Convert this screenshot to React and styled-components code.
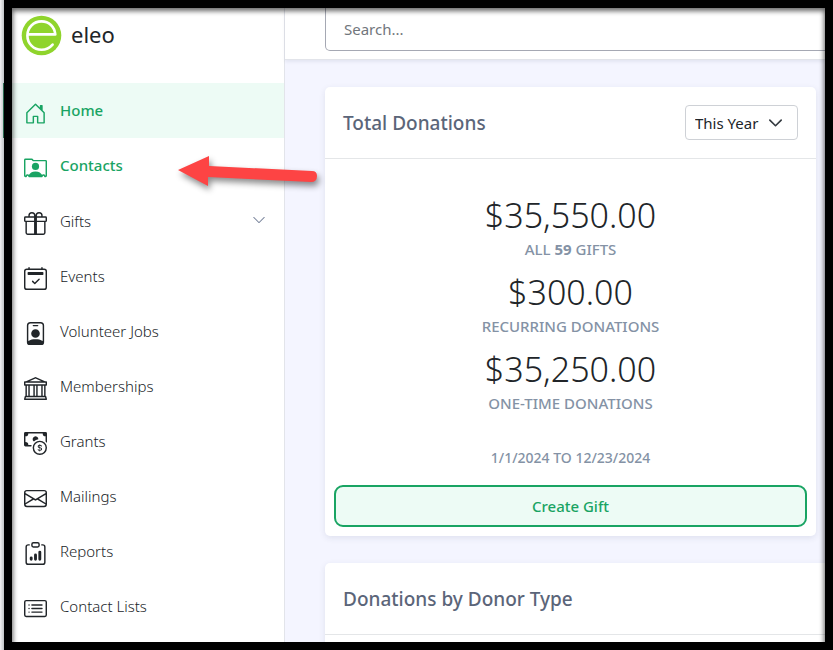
import { useState } from "react";
import styled, { createGlobalStyle } from "styled-components";
import {
  BsBank,
  BsCalendar2Check,
  BsCardList,
  BsCashCoin,
  BsChevronDown,
  BsClipboardData,
  BsEnvelope,
  BsGift,
  BsHouseDoor,
  BsPersonBadge,
  BsPersonRolodex,
} from "react-icons/bs";

const GlobalStyle = createGlobalStyle`
  * {
    box-sizing: border-box;
  }
  body {
    margin: 0;
    color: #212529;
    font-family: "Noto Sans", "Open Sans", sans-serif;
    font-size: 15px;
  }
`;

const Page = styled.div`
  position: relative;
  padding-left: 4px;
  background: linear-gradient(to right, #f2f2f3, #bfc2c5 4px);
`;

// edge of the active item, seen outside the frame
const ActiveEdge = styled.span`
  position: absolute;
  left: 3px;
  top: 83px;
  width: 1px;
  height: 55px;
  background: #2c6b50;
`;

const Frame = styled.div`
  position: relative;
  height: 100vh;
  border: 8px solid #000;
  display: flex;
  overflow: hidden;
  background: #f4f5ff;

  /* soft shadow the frame casts on the page */
  &::after {
    content: "";
    position: absolute;
    inset: 0 0 -12px;
    box-shadow: inset 0 2px 5px 1px rgba(0, 0, 0, 0.6);
    pointer-events: none;
    z-index: 3;
  }
`;

const Sidebar = styled.aside`
  flex: 0 0 273px;
  background: #fff;
  border-right: 1px solid #e2e4ea;
`;

const Brand = styled.a`
  display: flex;
  align-items: center;
  gap: 9px;
  height: 75px;
  padding: 0 9px 20px;
  color: #212529;
  font-size: 22px;
  font-weight: 400;
  line-height: 28px;
  text-decoration: none;
`;

const BrandName = styled.span`
  padding-bottom: 3px;
`;

const NavItem = styled.a`
  display: flex;
  align-items: center;
  gap: 13px;
  height: 55px;
  padding: 0 18px 0 12px;
  background: ${(props) => (props.$active ? "#edfbf5" : "transparent")};
  color: ${(props) => (props.$green ? "#19a463" : "#212529")};
  font-weight: ${(props) => (props.$green ? 500 : 300)};
  text-decoration: none;

  svg {
    flex: none;
  }
  > svg:first-child {
    margin-top: 6px;
  }
  > svg:last-child {
    margin-bottom: 2px;
  }
`;

const NavLabel = styled.span`
  flex: 1;
  padding-bottom: ${(props) => (props.$green ? "2px" : "0")};
`;

const Main = styled.main`
  flex: 1;
  min-width: 0;
`;

const TopBar = styled.header`
  height: 52px;
  padding-left: 40px;
  background: #fff;
  border-bottom: 1px solid #e2e4ea;
  box-shadow: 0 2px 3px rgba(40, 45, 90, 0.08);
`;

const Search = styled.input`
  display: block;
  width: calc(100% + 8px);
  height: 43px;
  padding: 0 18px;
  border: 1px solid #a5a8b3;
  border-top: none;
  border-radius: 0 0 5px 5px;
  background: #fff;
  font: inherit;
  font-weight: 400;

  &::placeholder {
    color: #71767c;
    opacity: 1;
  }
`;

const Cards = styled.div`
  display: flex;
  flex-direction: column;
  gap: 27px;
  padding: 27px 9px 0 40px;
`;

const Card = styled.section`
  margin-right: ${(props) => (props.$wide ? "-20px" : "0")};
  background: #fff;
  border-radius: 5px;
  box-shadow: 0 2px 6px rgba(40, 45, 90, 0.1);
`;

const CardHeader = styled.div`
  display: flex;
  align-items: center;
  justify-content: space-between;
  height: 72px;
  padding: 0 18px;
  border-bottom: 1px solid #e4e6e8;
`;

const CardTitle = styled.h2`
  margin: 0;
  color: #5b6579;
  font-size: 19px;
  font-weight: 500;
`;

const SelectBox = styled.div`
  position: relative;

  svg {
    position: absolute;
    right: 16px;
    top: 11px;
    pointer-events: none;
  }
`;

const Select = styled.select`
  appearance: none;
  width: 113px;
  height: 35px;
  padding: 0 9px;
  border: 1px solid #ced1d6;
  border-radius: 4px;
  background: #fff;
  color: #212529;
  font: inherit;
`;

const CardBody = styled.div`
  padding: 33px 9px 9px;
  text-align: center;
`;

const Stat = styled.div`
  height: 77px;
`;

const Amount = styled.div`
  font-size: 34px;
  font-weight: 300;
  line-height: 46px;
`;

const Caption = styled.div`
  color: #8492a5;
  font-size: 15px;
  font-weight: 500;
  line-height: 22px;
`;

const Period = styled(Caption)`
  margin: 24px 0 16px;
  font-size: 14px;
`;

const CreateButton = styled.button`
  width: 100%;
  height: 42px;
  border: 2px solid #19a463;
  border-radius: 9px;
  background: #edfbf5;
  color: #19a463;
  font: inherit;
  font-weight: 500;
  cursor: pointer;
`;

const Arrow = styled.svg`
  position: absolute;
  left: 162px;
  top: 142px;
  z-index: 2;
  filter: drop-shadow(2px 4px 3px rgba(0, 0, 0, 0.45));
  pointer-events: none;
`;

const navItems = [
  { label: "Home", icon: BsHouseDoor, active: true, green: true },
  { label: "Contacts", icon: BsPersonRolodex, green: true },
  { label: "Gifts", icon: BsGift, more: true },
  { label: "Events", icon: BsCalendar2Check },
  { label: "Volunteer Jobs", icon: BsPersonBadge },
  { label: "Memberships", icon: BsBank },
  { label: "Grants", icon: BsCashCoin },
  { label: "Mailings", icon: BsEnvelope },
  { label: "Reports", icon: BsClipboardData },
  { label: "Contact Lists", icon: BsCardList },
];

function Logo() {
  return (
    <svg width="41" height="41" viewBox="0 0 41 41" aria-hidden="true">
      <circle cx="20.5" cy="20.5" r="19.8" fill="#8fd42c" />
      <path
        d="M8.5 19.4H34.3C33.5 11.5 28 6.4 20.5 6.4C12.5 6.4 6.4 12.6 6.4 20.5C6.4 28.5 12.5 34.8 20.5 34.8C25 34.8 28.8 32.8 31.6 29.6"
        fill="none"
        stroke="#fff"
        strokeWidth="2.6"
        strokeLinecap="round"
        strokeLinejoin="round"
      />
    </svg>
  );
}

function App() {
  const [search, setSearch] = useState("");
  const [period, setPeriod] = useState("This Year");

  return (
    <Page>
      <GlobalStyle />
      <ActiveEdge />
      <Frame>
        <Sidebar>
          <Brand href="#">
            <Logo />
            <BrandName>eleo</BrandName>
          </Brand>
          <nav>
            {navItems.map(({ label, icon: Icon, active, green, more }) => (
              <NavItem key={label} href="#" $active={active} $green={green}>
                <Icon size={23} />
                <NavLabel $green={green}>{label}</NavLabel>
                {more && <BsChevronDown size={14} color="#78839b" />}
              </NavItem>
            ))}
          </nav>
        </Sidebar>
        <Main>
          <TopBar>
            <Search
              type="search"
              aria-label="Search"
              placeholder="Search..."
              value={search}
              onChange={(e) => setSearch(e.target.value)}
            />
          </TopBar>
          <Cards>
            <Card>
              <CardHeader>
                <CardTitle>Total Donations</CardTitle>
                <SelectBox>
                  <Select
                    aria-label="Period"
                    value={period}
                    onChange={(e) => setPeriod(e.target.value)}
                  >
                    <option>This Year</option>
                  </Select>
                  <svg width="13" height="13" viewBox="0 0 16 16" aria-hidden="true">
                    <path
                      d="m1 5 7 7 7-7"
                      fill="none"
                      stroke="#343a40"
                      strokeWidth="2"
                      strokeLinecap="round"
                      strokeLinejoin="round"
                    />
                  </svg>
                </SelectBox>
              </CardHeader>
              <CardBody>
                <Stat>
                  <Amount>$35,550.00</Amount>
                  <Caption>
                    ALL <b>59</b> GIFTS
                  </Caption>
                </Stat>
                <Stat>
                  <Amount>$300.00</Amount>
                  <Caption>RECURRING DONATIONS</Caption>
                </Stat>
                <Stat>
                  <Amount>$35,250.00</Amount>
                  <Caption>ONE-TIME DONATIONS</Caption>
                </Stat>
                <Period>1/1/2024 TO 12/23/2024</Period>
                <CreateButton type="button">Create Gift</CreateButton>
              </CardBody>
            </Card>
            <Card $wide>
              <CardHeader>
                <CardTitle>Donations by Donor Type</CardTitle>
              </CardHeader>
              <CardBody />
            </Card>
          </Cards>
        </Main>
        <Arrow width="150" height="44" viewBox="0 0 150 44" aria-hidden="true">
          <path
            d="M4 20 35 6V16L138 21Q143 21 143 26Q143 32 137 32L34 27V36Z"
            fill="#fd4444"
          />
        </Arrow>
      </Frame>
    </Page>
  );
}

export default App;
